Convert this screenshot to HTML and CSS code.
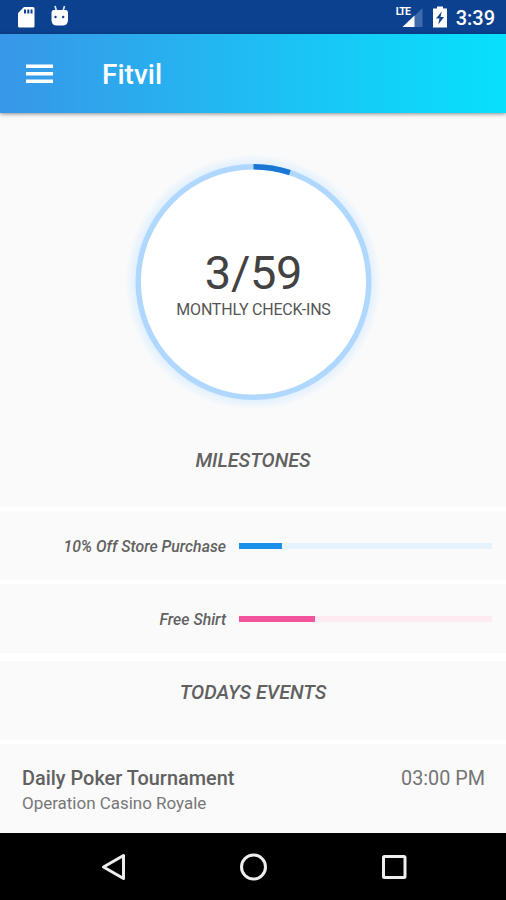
FILE: index.html
```html
<!DOCTYPE html>
<html lang="en">
<head>
<meta charset="utf-8">
<title>Fitvil</title>
<link rel="stylesheet" href="styles.css">
</head>
<body>
<div class="status-bar">
  <svg class="status-left" width="60" height="34" viewBox="0 0 60 34">
    <path fill="#fff" fill-rule="evenodd" d="M7 7h9a1.500 1.500 0 0 1 1.500 1.500v17.500a1.500 1.500 0 0 1-1.500 1.500h-13.500a1.500 1.500 0 0 1-1.500-1.500V13zM7 9.500v4h2v-4zM10.300 9.500v4h2v-4zM13.500 9.500v4h2v-4z"/>
    <path fill="none" stroke="#d9e4fa" stroke-width="1.700" d="M38 6l1.500 5M47.500 6l-1.500 5"/>
    <path fill="#fff" d="M37 10h11.500q2.500 0 2.500 3v7q0 5.500-5.500 5.500h-5.500q-5.500 0-5.500-5.500v-7q0-3 2.500-3z"/>
    <circle cx="38.500" cy="17" r="1.200" fill="#0c418f"/><circle cx="46.200" cy="17" r="1.200" fill="#0c418f"/>
  </svg>
  <div class="status-right">
    <div class="signal">
      <svg width="28" height="34" viewBox="0 0 28 34">
        <path fill="#3f6bac" d="M25.500 8v19H6z"/>
        <path fill="#fff" d="M17.500 15.500V27H5.500z"/>
      </svg>
      <span class="lte">LTE</span>
    </div>
    <svg class="battery" width="16" height="34" viewBox="0 0 16 34">
      <path fill="#fff" d="M5 6.500h6v2h4V27.500H1V8.500h4z"/>
      <path fill="#0c418f" d="M9.800 11.500L4 18.500h3.500l-1.200 6 5.700-7.500H8.500z"/>
    </svg>
    <span class="clock">3:39</span>
  </div>
</div>
<header class="app-bar">
  <svg class="menu" width="27" height="20" viewBox="0 0 27 20"><path fill="#fff" d="M0 .5h27v3.500H0zM0 8h27v3.500H0zM0 15.500h27v3.500H0z"/></svg>
  <h1 class="title">Fitvil</h1>
</header>
<main class="content">
  <section class="checkins">
    <svg class="ring" width="260" height="260" viewBox="-130 -130 260 260">
      <defs><radialGradient id="halo" gradientUnits="userSpaceOnUse" cx="0" cy="0" r="128">
        <stop offset=".9" stop-color="#dceefe"/><stop offset="1" stop-color="#fafafa"/>
      </radialGradient></defs>
      <circle r="128" fill="url(#halo)"/>
      <circle cx=".5" r="115.300" fill="#fff" stroke="#b0d8ff" stroke-width="5.500"/>
      <path d="M.5-115.300A115.300 115.300 0 0 1 36.900-109.400" fill="none" stroke="#1976d2" stroke-width="5.500"/>
    </svg>
    <div class="checkin-text">
      <div class="count">3/59</div>
      <div class="caption">MONTHLY CHECK-INS</div>
    </div>
  </section>
  <h2 class="heading milestones"><span>MILESTONES</span></h2>
  <div class="goal"><span class="goal-name">10% Off Store Purchase</span><div class="track blue"><div class="fill" style="width:17%"></div></div></div>
  <div class="goal last"><span class="goal-name">Free Shirt</span><div class="track pink"><div class="fill" style="width:30%"></div></div></div>
  <h2 class="heading events"><span>TODAYS EVENTS</span></h2>
  <article class="event">
    <div><div class="event-name">Daily Poker Tournament</div><div class="venue">Operation Casino Royale</div></div>
    <time class="time">03:00 PM</time>
  </article>
</main>
<nav class="nav-bar">
  <svg width="30" height="30" viewBox="0 0 30 30"><path d="M25.500 3.500v23L5.500 15z"/></svg>
  <svg width="30" height="30" viewBox="0 0 30 30"><circle cx="14.500" cy="15" r="12"/></svg>
  <svg width="30" height="30" viewBox="0 0 30 30"><rect x="4.500" y="4.500" width="21.500" height="21" rx="1"/></svg>
</nav>
</body>
</html>
```
FILE: styles.css
```css
* { box-sizing: border-box; }
body {
  margin: 0;
  width: 506px;
  height: 900px;
  display: flex;
  flex-direction: column;
  overflow: hidden;
  background: #fafafa;
  color: #616161;
  font-family: Roboto, sans-serif;
}
h1, h2 { margin: 0; }
svg { display: block; flex: none; }
.status-bar {
  height: 34px;
  flex: none;
  display: flex;
  justify-content: space-between;
  padding: 0 11px 0 17px;
  background: #0c418f;
}
.status-right { display: flex; }
.signal { position: relative; margin-right: 7px; }
.lte {
  position: absolute;
  left: -1px;
  top: 6px;
  color: #fff;
  font-size: 10.5px;
  line-height: 12px;
  font-weight: 700;
  letter-spacing: -.8px;
}
.battery { margin-right: 8px; }
.clock { color: #fff; font-size: 20px; font-weight: 500; line-height: 36px; }
.app-bar {
  height: 79px;
  flex: none;
  display: flex;
  align-items: center;
  padding: 0 26px;
  background: linear-gradient(90deg, #3996e8, #18c8f6 65%, #08e0fc);
  box-shadow: 0 1px 4px rgba(0, 0, 0, .45);
  z-index: 1;
}
.title {
  margin-left: 49px;
  padding-top: 2px;
  color: #fff;
  font-size: 28px;
  font-weight: 500;
  line-height: 36px;
}
.content { height: 720px; flex: none; }
.checkins {
  height: 307px;
  display: grid;
  justify-items: center;
  padding: 39px 0 8px;
}
.ring, .checkin-text { grid-area: 1 / 1; }
.checkin-text { text-align: center; padding: 93px 0 0 1px; }
.count { color: #424242; font-size: 47px; line-height: 55px; letter-spacing: -.3px; }
.caption { color: #555; font-size: 16px; line-height: 20px; letter-spacing: -.22px; }
.heading {
  display: flex;
  align-items: center;
  justify-content: center;
  font-size: 19.7px;
  font-style: italic;
  font-weight: 500;
}
.milestones { height: 91px; padding-bottom: 6px; border-bottom: 4px solid #fff; }
.goal {
  height: 73px;
  display: grid;
  grid-template-columns: 226px 253px;
  column-gap: 13px;
  align-items: center;
  border-bottom: 4px solid #fff;
}
.goal.last { height: 77px; border-bottom-width: 8px; }
.goal-name { padding-top: 2px; text-align: right; font-size: 15.8px; font-style: italic; font-weight: 500; }
.track { height: 6px; }
.fill { height: 100%; }
.blue { background: #e6f3fd; }
.blue .fill { background: #1a91e8; }
.pink { background: #fdebf1; }
.pink .fill { background: #f2539a; }
.events { height: 83px; padding-bottom: 16px; border-bottom: 4px solid #fff; }
.event {
  display: flex;
  justify-content: space-between;
  padding: 21px 21px 0 22px;
}
.event-name { font-size: 19.9px; font-weight: 500; line-height: 27px; }
.venue { color: #777; font-size: 17px; line-height: 23px; letter-spacing: -.02px; }
.time { color: #757575; font-size: 19.8px; line-height: 27px; }
.nav-bar {
  height: 67px;
  flex: none;
  display: flex;
  justify-content: space-between;
  padding: 19px 97px 0 98px;
  background: #000;
}
.nav-bar svg { fill: none; stroke: #eee; stroke-width: 3; stroke-linejoin: round; }
```
